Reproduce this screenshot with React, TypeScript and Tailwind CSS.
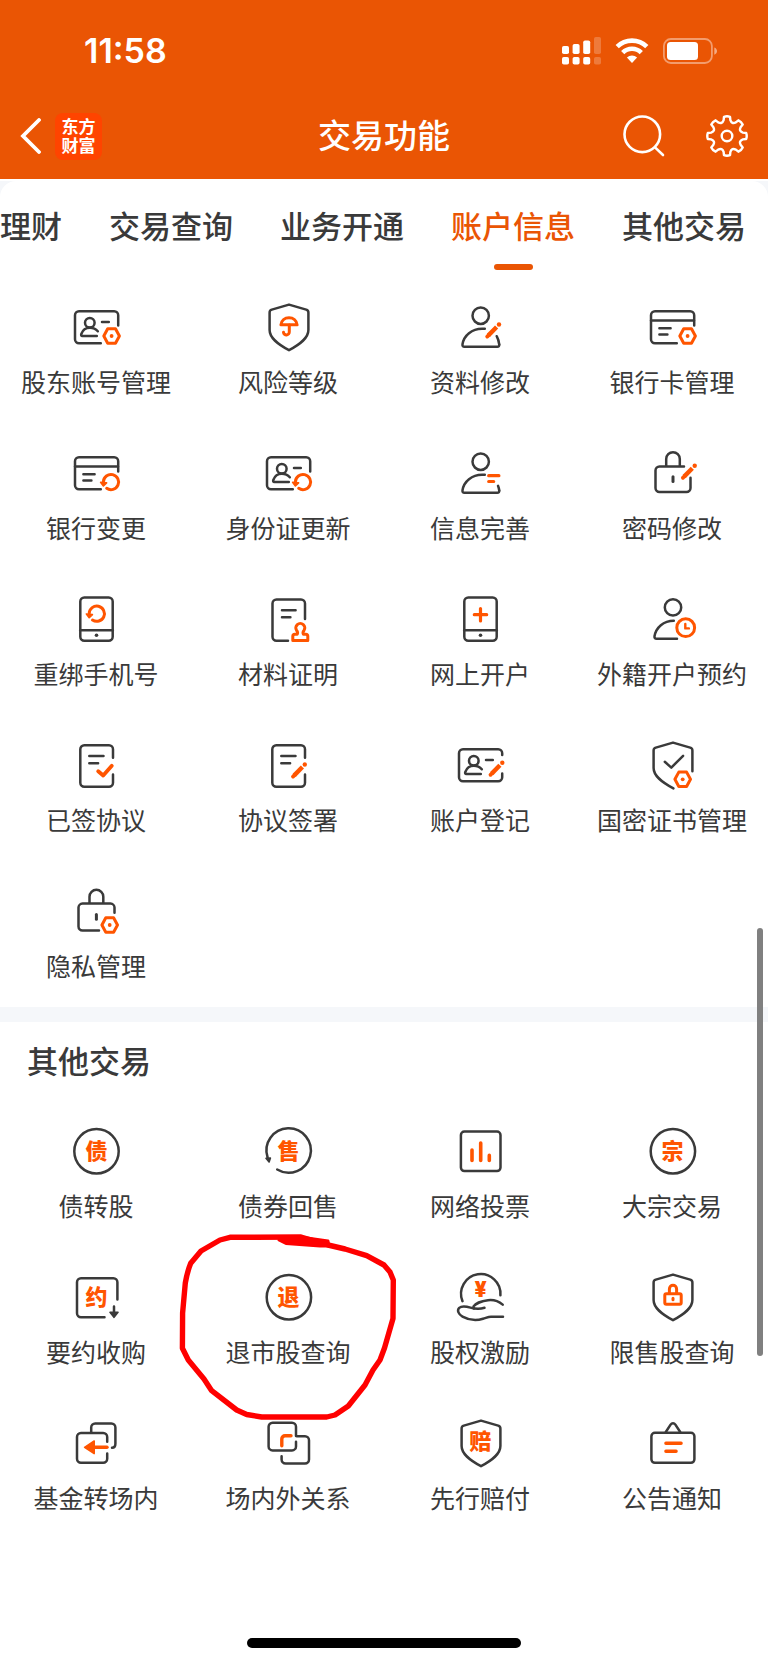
import React, { useState } from 'react';

const DARK = '#3a3a3a';
const ORANGE = '#ff5500';

/* ---------- small parts shared by the icons ---------- */

const Svg: React.FC<{ children: React.ReactNode }> = ({ children }) => (
  <svg viewBox="0 0 60 60" className="h-[60px] w-[60px]" fill="none" stroke={DARK} strokeWidth="2.5" strokeLinecap="round" strokeLinejoin="round" aria-hidden="true">
    {children}
  </svg>
);

type Pos = { x: number; y: number };

const Hex: React.FC<Pos> = ({ x, y }) => (
  <g transform={`translate(${x} ${y})`} stroke={ORANGE} strokeWidth="3">
    <path d="M-3.9-7.2H3.9L7.8 0 3.9 7.2H-3.9L-7.8 0Z" />
    <circle r="1.9" fill={ORANGE} stroke="none" />
  </g>
);

const Refresh: React.FC<Pos> = ({ x, y }) => (
  <g transform={`translate(${x} ${y})`} stroke={ORANGE} strokeWidth="3">
    <path d="M-4.3 6.3A7.6 7.6 0 1 0-7.6-.3" />
    <path d="M-10.4.3-4.4.9-7.6 4Z" fill={ORANGE} strokeWidth="1.6" />
  </g>
);

// x, y is the outer end of the tip
const Pencil: React.FC<Pos> = ({ x, y }) => (
  <g transform={`translate(${x} ${y})`} stroke={ORANGE}>
    <path d="M2.2-2.2 4-4" strokeWidth="3.8" />
    <path d="M3.4-3.4 11.6-11.8" strokeWidth="4.4" strokeLinecap="butt" />
    <circle cx="14" cy="-14.3" r="2.2" fill={ORANGE} stroke="none" />
  </g>
);

const MiniPerson = () => (
  <>
    <circle cx="23.8" cy="25.8" r="4.8" />
    <path d="M30.8 39H16.4c-1.2 0-1.5-.9-1.1-2 1.4-3.8 4.7-6.2 8.5-6.2 3.2 0 6 1.1 8 3.4M36 25h6.8" />
  </>
);

const Glyph: React.FC<{ ch: string; y?: number }> = ({ ch, y = 38 }) => (
  <text x="30.6" y={y} textAnchor="middle" fontSize="22" fontWeight="900" fill={ORANGE} stroke="none">{ch}</text>
);

const SHIELD = 'M31 7.6 48.2 12.6a3 3 0 0 1 2.2 3V33c0 8-8 14-19.4 20.2C19.6 47 11.6 41 11.6 33V15.6a3 3 0 0 1 2.2-3Z';
const CARD_OPEN = 'M34.8 46.2H13a4 4 0 0 1-4-4V18.2a4 4 0 0 1 4-4h35.2a4 4 0 0 1 4 4V28.4';
const PERSON_BODY = 'M34.8 31.8H32c-10 0-18.2 6.6-19.5 15.5-.2 1.7.5 2.5 2 2.5h32.8c1.4 0 2.100-.9 1.900-2.400';

/* ---------- icons ---------- */

const IdSettings = () => <Svg><path d={CARD_OPEN} /><MiniPerson /><Hex x={45.6} y={39} /></Svg>;
const IdRefresh = () => <Svg><path d={CARD_OPEN} /><MiniPerson /><Refresh x={45} y={39} /></Svg>;
const IdEdit = () => (
  <Svg>
    <path d="M52.2 20v-1.8a4 4 0 0 0-4-4H13a4 4 0 0 0-4 4v24a4 4 0 0 0 4 4h35.2a4 4 0 0 0 4-4V38.4" />
    <MiniPerson /><Pencil x={38.3} y={42} />
  </Svg>
);
const Umbrella = () => (
  <Svg>
    <path d={SHIELD} />
    <g stroke={ORANGE} strokeWidth="3"><path d="M22.9 27.8c.5-4.3 3.9-7 8.1-7s7.6 2.7 8.1 7Z" /><path d="M31.3 28v6.7a2.9 2.9 0 0 1-5.8.6" /></g>
  </Svg>
);
const PersonEdit = () => (
  <Svg><circle cx="30.7" cy="18.7" r="8.2" /><path d={PERSON_BODY} /><path d="M49.2 47.4c-.3-3-1.1-5.6-2.5-8.2" /><Pencil x={35} y={41.8} /></Svg>
);
const PersonLines = () => (
  <Svg>
    <circle cx="30.7" cy="18.7" r="8.2" /><path d={PERSON_BODY} /><path d="M49.2 47.4c-.2-1.8-.6-3.2-1.2-4.6" />
    <path d="M38.7 32.7h10.2M38.7 38.5h5" stroke={ORANGE} strokeWidth="3.2" />
  </Svg>
);
const PersonClock = () => (
  <Svg>
    <circle cx="31" cy="18.4" r="8.2" />
    <path d="M31.8 31.8C21.5 31.8 14 38.5 12.5 47.3c-.2 1.7.6 2.5 2.1 2.5H35" />
    <g stroke={ORANGE} strokeWidth="3"><circle cx="43.7" cy="38.7" r="8.9" /><path d="M43.3 35v4.4h3.6" strokeWidth="2.4" /></g>
  </Svg>
);
const BankCard = () => <><path d={CARD_OPEN} /><path d="M9 23.4h43M17.4 31.3h11.2M17.4 37.4h8" /></>;
const CardSettings = () => <Svg><BankCard /><Hex x={45.6} y={39} /></Svg>;
const CardRefresh = () => <Svg><BankCard /><Refresh x={45} y={39} /></Svg>;
const LockEdit = () => (
  <Svg>
    <path d="M42 23.5H17.5a4 4 0 0 0-4 4V45a4 4 0 0 0 4 4h27a4 4 0 0 0 4-4V34.8M24.2 23v-7a6.8 6.8 0 0 1 13.6 0v7" />
    <path d="M31 33.8v4.7" strokeWidth="3" /><Pencil x={38.7} y={37} />
  </Svg>
);
const LockSettings = () => (
  <Svg>
    <path d="M33 49.5H16.5a4 4 0 0 1-4-4V26.6a4 4 0 0 1 4-4h28a4 4 0 0 1 4 4v5.2M23.5 22.5V15.7a6.9 6.9 0 0 1 13.8 0v6.8" />
    <path d="M30.4 33.5v4.7" strokeWidth="3" /><Hex x={43.7} y={44} />
  </Svg>
);
const Phone = () => (
  <><rect x="14.3" y="8.5" width="32.4" height="43.3" rx="4" /><path d="M14.3 41.3h32.4" /><circle cx="30.5" cy="46.3" r="1.8" fill={DARK} stroke="none" /></>
);
const PhoneRefresh = () => <Svg><Phone /><Refresh x={30.8} y={24.7} /></Svg>;
const PhonePlus = () => <Svg><Phone /><path d="M30.5 19.5v12.4M24.3 25.7h12.4" stroke={ORANGE} strokeWidth="3.2" /></Svg>;
const DocStamp = () => (
  <Svg>
    <path d="M30 51.8H18.5a4 4 0 0 1-4-4V14.5a4 4 0 0 1 4-4H43a4 4 0 0 1 4 4v15.6M24 21.3h13.6M24 28.3h8.4" />
    <path d="M34.8 51.5v-4.2a2 2 0 0 1 2-2h2.4c.8-1.5.4-2.6-.6-3.8a4.5 4.5 0 1 1 7.4 0c-1 1.2-1.4 2.3-.6 3.8h2.4a2 2 0 0 1 2 2v4.2Z" stroke={ORANGE} strokeWidth="3" />
  </Svg>
);
const Doc = () => (
  <path d="M47 22.8V14.3a4 4 0 0 0-4-4H18.3a4 4 0 0 0-4 4v33.5a4 4 0 0 0 4 4H43a4 4 0 0 0 4-4V39.5M23.3 21.1h14.2M23.3 28.3h8.8" />
);
const DocCheck = () => <Svg><Doc /><path d="M32.2 36.2 37.2 40.5 45.8 30.8" stroke={ORANGE} strokeWidth="3.8" /></Svg>;
const DocEdit = () => <Svg><Doc /><Pencil x={32.8} y={43.8} /></Svg>;
const ShieldCheck = () => (
  <Svg>
    <path d="M31.4 53.4C19.6 47 11.6 41 11.6 33V15.6a3 3 0 0 1 2.2-3L31 7.6l17.2 5a3 3 0 0 1 2.2 3V36.2M22.8 26.8l6.5 5.8 11.8-11.8" />
    <Hex x={40.7} y={44.3} />
  </Svg>
);

const CircleDebt = () => <Svg><circle cx="30.5" cy="30.3" r="22.2" /><Glyph ch="债" /></Svg>;
const CircleBlock = () => <Svg><circle cx="30.9" cy="30.3" r="22.2" /><Glyph ch="宗" /></Svg>;
const CircleDelist = () => <Svg><circle cx="30.9" cy="30.3" r="22.2" /><Glyph ch="退" /></Svg>;
const CircleSell = () => (
  <Svg>
    <path d="M19.2 48.5A22.2 22.2 0 1 0 9.6 36.5" />
    <path d="M8 37.3l4.4-.3-1.3 4Z" fill={DARK} strokeWidth="1.6" /><Glyph ch="售" />
  </Svg>
);
const Votes = () => (
  <Svg>
    <rect x="10.9" y="10.5" width="39.6" height="39.6" rx="3.5" />
    <path d="M22 29v10.5M30.7 22v17.5M39.3 34.4v5.1" stroke={ORANGE} strokeWidth="3.6" />
  </Svg>
);
const Tender = () => (
  <Svg>
    <path d="M38.5 50.2H15a4 4 0 0 1-4-4V15.3a4 4 0 0 1 4-4h32.4a4 4 0 0 1 4 4v17.3M48 39.5V49" />
    <path d="M44 45.3h8L48 50.3Z" fill={DARK} strokeWidth="1.6" /><Glyph ch="约" />
  </Svg>
);
const HandCoin = () => (
  <Svg>
    <path d="M12.5 34.2A19.7 19.7 0 1 1 50.4 28.3" />
    <path d="M52.7 37.6C49 34.5 43 32.6 38 33.2c-6 .7-12.5 3.3-14.5 6.2l.3 2.2" />
    <path d="M34.5 40.8c-5 1.6-9.5 1.2-14-.2-4.5-1.3-9-1.8-11.3.3-2.5 2.4-.6 6.6 3.3 8.7 6 3.3 14 4.3 20.5 2.2 4-1.2 5.500-2 8-2H53" />
    <text x="30.6" y="29.500" textAnchor="middle" fontSize="21" fontWeight="900" fill={ORANGE} stroke="none" className="font-['Inter',sans-serif]">¥</text>
  </Svg>
);
const ShieldLock = () => (
  <Svg>
    <path d={SHIELD} />
    <g stroke={ORANGE} strokeWidth="3"><rect x="22.8" y="26.8" width="16.4" height="10.4" rx="1.5" /><path d="M27.4 26.5v-4.6a3.6 3.6 0 0 1 7.2 0v4.6M31 31.2v1.6" /></g>
  </Svg>
);
const ShieldPay = () => <Svg><path d={SHIELD} /><Glyph ch="赔" y={36.4} /></Svg>;
const FundMove = () => (
  <Svg>
    <path d="M41.2 28.8V24a4 4 0 0 0-4-4H15a4 4 0 0 0-4 4v21.8a4 4 0 0 0 4 4h22.2a4 4 0 0 0 4-4V40.5" />
    <path d="M25.2 19.5v-5.1a4 4 0 0 1 4-4h16.2a4 4 0 0 1 4 4v16.3c0 2.6-1.2 4-3.4 4" />
    <path d="M41 34.3H28" stroke={ORANGE} strokeWidth="3.4" />
    <path d="M18.6 34.3 28.2 28v12.6Z" fill={ORANGE} stroke={ORANGE} strokeWidth="1.6" />
  </Svg>
);
const Relation = () => (
  <Svg>
    <path d="M38 22.9V13.8a4 4 0 0 0-4-4H14.6a4 4 0 0 0-4 4v19.6a4 4 0 0 0 4 4H34a4 4 0 0 0 4-4V28.7" />
    <path d="M39 23.2h8a4 4 0 0 1 4 4v19.4a4 4 0 0 1-4 4H27.6a4 4 0 0 1-4-4V43.2" />
    <path d="M23.8 32.8V26a3.2 3.2 0 0 1 3.2-3.2h6" stroke={ORANGE} strokeWidth="3.4" />
  </Svg>
);
const Notice = () => (
  <Svg>
    <rect x="9.4" y="19.8" width="43" height="30" rx="3.5" />
    <path d="M23.8 19 28.6 11.6c1.3-1.9 3.5-1.9 4.8 0L38.2 19" />
    <path d="M23.9 30.3h15.200M23.9 38.2h10.2" stroke={ORANGE} strokeWidth="3.4" />
  </Svg>
);

/* ---------- header drawings ---------- */

const polar = (r: number, deg: number) => {
  const a = (deg * Math.PI) / 180;
  return `${(21 + r * Math.sin(a)).toFixed(2)} ${(21 - r * Math.cos(a)).toFixed(2)}`;
};

// eight teeth, each joined to the next one by a round valley
const gearPath = [0, 45, 90, 135, 180, 225, 270, 315]
  .map((t, i) => `${i ? 'L' : 'M'}${polar(16.2, t - 12)}L${polar(19.4, t - 9)}Q${polar(20.3, t)} ${polar(19.4, t + 9)}L${polar(16.2, t + 12)}Q${polar(12.6, t + 22.5)} ${polar(16.2, t + 33)}`)
  .join('') + 'Z';

const StatusBar = () => (
  <div className="flex h-[101px] items-center justify-between pr-[50px] pl-[84px]">
    <span className="font-['Inter',sans-serif] text-[34px] leading-10 font-semibold">11:58</span>
    <div className="flex items-center gap-[14px]">
      <svg viewBox="0 0 39 28" className="h-7 w-[39px]" fill="#fff" aria-hidden="true">
        <rect y="9" width="7" height="8" rx="1.8" /><rect x="10.6" y="7" width="7" height="10" rx="1.8" />
        <rect x="21.2" y="3.5" width="7" height="13.5" rx="1.8" /><rect x="32" y="0" width="7" height="17" rx="1.8" opacity=".22" />
        <rect y="20" width="7" height="7.5" rx="1.8" /><rect x="10.6" y="20" width="7" height="7.5" rx="1.8" />
        <rect x="21.2" y="20" width="7" height="7.5" rx="1.8" /><rect x="32" y="20" width="7" height="7.5" rx="1.8" opacity=".22" />
      </svg>
      <svg viewBox="0 0 34 25" className="h-[25px] w-[34px]" fill="none" stroke="#fff" strokeWidth="4.6" aria-hidden="true">
        <path d="M2.2 8.7a21 21 0 0 1 29.6 0M7.7 14.6a13.2 13.2 0 0 1 18.6 0" />
        <path d="M17 25 11.9 19.6a7.3 7.3 0 0 1 10.2 0Z" fill="#fff" stroke="none" />
      </svg>
      <svg viewBox="0 0 55 26" className="h-[26px] w-[55px]" aria-hidden="true">
        <rect x=".9" y="1" width="48" height="24" rx="7" fill="none" stroke="#fff" strokeOpacity=".42" strokeWidth="1.8" />
        <rect x="4" y="4" width="31" height="18" rx="3.5" fill="#fff" />
        <path d="M51.3 9.5c3.6 1.2 3.6 6 0 7.2Z" fill="#fff" fillOpacity=".5" />
      </svg>
    </div>
  </div>
);

const Header = () => (
  <header className="border-b-2 border-white bg-[#ea5504] pb-2 text-white">
    <StatusBar />
    <div className="grid h-[70px] grid-cols-[1fr_auto_1fr] items-center px-5">
      <div className="flex items-center gap-[14px]">
        <button type="button" aria-label="返回">
          <svg viewBox="0 0 21 36" className="h-9 w-[21px]" fill="none" stroke="#fff" strokeWidth="3.8" aria-hidden="true"><path d="M19 2 3 18l16 16" strokeLinecap="round" /></svg>
        </button>
        <a href="#home" className="flex h-[47px] w-[47px] items-center justify-center rounded-lg bg-[#ff4400] pb-[2px]">
          <span className="w-[34px] text-[17px] leading-[19px] font-bold break-all">东方财富</span>
        </a>
      </div>
      <h1 className="pb-1 text-[33px] leading-[46px] font-medium">交易功能</h1>
      <div className="flex items-center justify-end gap-[41px]">
        <button type="button" aria-label="搜索">
          <svg viewBox="0 0 42 42" className="h-[42px] w-[42px]" fill="none" stroke="#fff" strokeWidth="2.6" strokeLinecap="round" aria-hidden="true"><circle cx="19.3" cy="19.3" r="17.8" /><path d="M32 32.4 40 40" /></svg>
        </button>
        <button type="button" aria-label="设置">
          <svg viewBox="0 0 42 42" className="h-[42px] w-[42px]" fill="none" stroke="#fff" strokeWidth="2.4" strokeLinejoin="round" aria-hidden="true"><path d={gearPath} /><circle cx="21" cy="21" r="5.3" /></svg>
        </button>
      </div>
    </div>
  </header>
);

/* ---------- body ---------- */

type Item = { label: string; icon: React.FC; circled?: boolean };

const accountItems: Item[] = [
  { label: '股东账号管理', icon: IdSettings },
  { label: '风险等级', icon: Umbrella },
  { label: '资料修改', icon: PersonEdit },
  { label: '银行卡管理', icon: CardSettings },
  { label: '银行变更', icon: CardRefresh },
  { label: '身份证更新', icon: IdRefresh },
  { label: '信息完善', icon: PersonLines },
  { label: '密码修改', icon: LockEdit },
  { label: '重绑手机号', icon: PhoneRefresh },
  { label: '材料证明', icon: DocStamp },
  { label: '网上开户', icon: PhonePlus },
  { label: '外籍开户预约', icon: PersonClock },
  { label: '已签协议', icon: DocCheck },
  { label: '协议签署', icon: DocEdit },
  { label: '账户登记', icon: IdEdit },
  { label: '国密证书管理', icon: ShieldCheck },
  { label: '隐私管理', icon: LockSettings },
];

const otherItems: Item[] = [
  { label: '债转股', icon: CircleDebt },
  { label: '债券回售', icon: CircleSell },
  { label: '网络投票', icon: Votes },
  { label: '大宗交易', icon: CircleBlock },
  { label: '要约收购', icon: Tender },
  { label: '退市股查询', icon: CircleDelist, circled: true },
  { label: '股权激励', icon: HandCoin },
  { label: '限售股查询', icon: ShieldLock },
  { label: '基金转场内', icon: FundMove },
  { label: '场内外关系', icon: Relation },
  { label: '先行赔付', icon: ShieldPay },
  { label: '公告通知', icon: Notice },
];

const RedMark = () => (
  <svg viewBox="0 0 218 188" className="pointer-events-none absolute -top-[34px] left-1/2 z-10 h-[188px] w-[218px] max-w-none -translate-x-1/2" fill="none" stroke="#ff0000" strokeWidth="5.4" strokeLinejoin="round" aria-hidden="true">
    <path d="M122 4 51 4.300 41 7 22 18 11.700 30.300C9 37 7.500 43 6.300 50L3.600 80 3.400 115.300 9.300 127 25 146l7.700 11.700L57.700 177l10 4.500 15 2.500h65l8.300-2 13.300-9L186 152l8-15 7-10 4.500-12 8.500-29.500.3-38.500L211 39l-6-7-17.300-9.300L166 16l-17-4Z" />
    <path d="M100 7l7 3.500 34 2.500h9l-1-5-28-4Z" fill="#ff0000" strokeWidth="3" />
  </svg>
);

const FeatureGrid: React.FC<{ items: Item[] }> = ({ items }) => (
  <div className="grid grid-cols-4 gap-y-11">
    {items.map(({ label, icon: Icon, circled }) => (
      <button key={label} type="button" className="relative flex flex-col items-center gap-[6px]">
        <Icon />
        <span className="text-[25px] leading-9 whitespace-nowrap">{label}</span>
        {circled && <RedMark />}
      </button>
    ))}
  </div>
);

const tabs = ['理财', '交易查询', '业务开通', '账户信息', '其他交易'];

const App: React.FC = () => {
  const [active, setActive] = useState('账户信息');

  return (
    <div className="relative flex min-h-screen flex-col overflow-x-hidden bg-white font-['Noto_Sans_CJK_SC',sans-serif] text-[#3a3a3a]">
      <Header />

      <main className="grow bg-[#f5f7fa]">
        <section className="rounded-t-2xl bg-white pb-6">
          <nav className="mb-[27px] flex justify-between pt-[21px] pr-[22px]">
            {tabs.map((tab) => (
              <button key={tab} type="button" onClick={() => setActive(tab)} className="flex flex-col items-center gap-4">
                <span className={tab === active ? 'text-[31px] leading-[46px] font-medium whitespace-nowrap text-[#ea5504]' : 'text-[31px] leading-[46px] font-medium whitespace-nowrap'}>{tab}</span>
                <span className={tab === active ? 'h-[6px] w-[39px] rounded-full bg-[#ea5504]' : 'h-[6px] w-[39px]'} />
              </button>
            ))}
          </nav>
          <FeatureGrid items={accountItems} />
        </section>

        <section className="mt-[15px] bg-white pt-[15px]">
          <h2 className="mb-[38px] pl-[27px] text-[31px] leading-[46px] font-medium">其他交易</h2>
          <FeatureGrid items={otherItems} />
          <div className="flex justify-center pt-[123px] pb-4">
            <div className="h-[10px] w-[274px] rounded-full bg-black" />
          </div>
        </section>
      </main>

      {/* scroll position thumb */}
      <div className="absolute top-[928px] right-[5px] h-[428px] w-[6px] rounded-full bg-[#808080]" />
    </div>
  );
};

export default App;
